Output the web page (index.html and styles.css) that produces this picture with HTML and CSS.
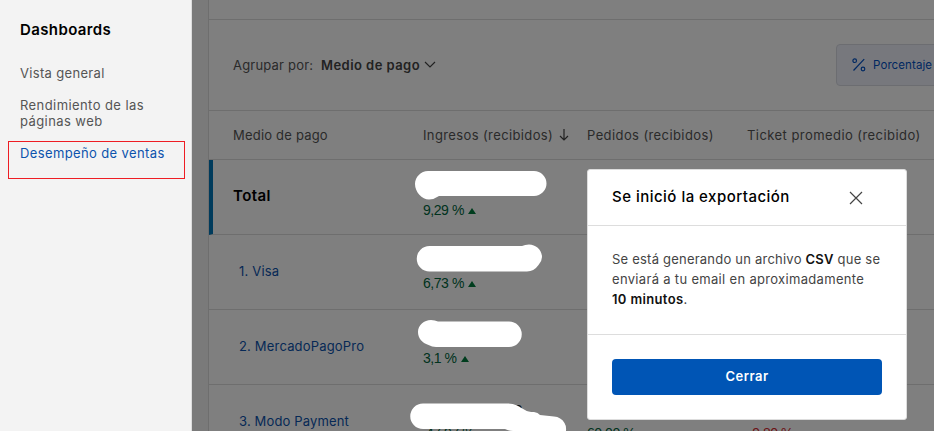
FILE: index.html
```html
<!DOCTYPE html>
<html lang="es">
<head>
<meta charset="utf-8">
<title>Dashboards</title>
<link rel="stylesheet" href="styles.css">
</head>
<body>
<div class="app">
  <nav class="sidebar">
    <h2><span>Dashboards</span></h2>
    <a><span>Vista general</span></a>
    <a class="nav-pages"><span>Rendimiento de las</span><br><span>páginas web</span></a>
    <a class="active"><span>Desempeño de ventas</span></a>
    <div class="highlight"></div>
  </nav>
  <main class="content">
    <section class="card">
      <div class="card-top"></div>
      <div class="toolbar">
        <span class="group-label">Agrupar por:</span>
        <span class="group-value">Medio de pago</span>
        <svg class="chevron" width="12" height="8" viewBox="0 0 12 8"><path d="M1 1l5 5 5-5"/></svg>
        <button class="percent">
          <svg width="14" height="14" viewBox="0 0 14 14"><circle cx="2.7" cy="2.7" r="1.8"/><circle cx="11" cy="11" r="1.8"/><path d="M12.2 1.2L1.5 12.5"/></svg>
          <span>Porcentaje</span>
        </button>
      </div>
      <div class="row head">
        <span>Medio de pago</span>
        <span class="sorted">Ingresos (recibidos)<svg width="10" height="12" viewBox="0 0 10 12"><path d="M5 0v11M1 7l4 4 4-4"/></svg></span>
        <span class="orders">Pedidos (recibidos)</span>
        <span class="ticket">Ticket promedio (recibido)</span>
      </div>
      <div class="row total"><b>Total</b><span class="change">9,29 %<i></i></span></div>
      <div class="row"><a>1. Visa</a><span class="change">6,73 %<i></i></span></div>
      <div class="row"><a class="mercado">2. MercadoPagoPro</a><span class="change">3,1 %<i></i></span></div>
      <div class="row"><a class="modo">3. Modo Payment</a><span class="change covered">47,97 %</span><span class="change">60,00 %</span><span class="change down">-9,80 %</span></div>
    </section>
    <div class="overlay"></div>
    <svg class="redactions" width="742" height="431" viewBox="192 0 742 431">
      <text class="digit" x="514.500" y="415">2</text>
      <path d="M428 171H534A12.5 12.5 0 0 1 534 196H439Q434 199.500 429 199.500C422 199.500 415 192 415 184C415 177 421 171 428 171Z"/>
      <path d="M429.500 246H522Q525 244.500 529 244.500C536 244.500 542 250 542 257Q542 261 538.500 265Q534 271.500 527 271.500H429.500A12.700 12.700 0 0 1 429.500 246Z"/>
      <path d="M431 320Q435 320 438 321.500H509A12.700 12.700 0 0 1 509 347H436Q432 347 428.500 345C422 343 418 338 418 332C418 325 424 320 431 320Z"/>
      <path d="M423 403.500H508Q513 403.500 517 405.500L525 410Q528 412 534 412Q538 412.500 540 415L554 416.500Q561 417 564.500 423Q566.500 426 566 431H513Q509 431 505 429H423A12.700 12.700 0 0 1 423 403.500Z"/>
    </svg>
  </main>
  <div class="modal">
    <header>
      <h3>Se inició la exportación</h3>
      <svg width="14" height="14" viewBox="0 0 14 14"><path d="M1 1l12 12M13 1L1 13"/></svg>
    </header>
    <div class="modal-body">
      <span class="line1">Se está generando un archivo <b>CSV</b> que se</span><br>
      <span class="line2">enviará a tu email en aproximadamente</span><br>
      <span class="line3"><b>10 minutos</b>.</span>
    </div>
    <footer><button>Cerrar</button></footer>
  </div>
</div>
</body>
</html>
```
FILE: styles.css
```css
* { box-sizing: border-box; }
body { margin: 0; font: 13px/16px Inter, "Liberation Sans", sans-serif; color: #555; }
button { font: inherit; }
.app { position: relative; display: flex; width: 934px; height: 431px; overflow: hidden; }
.sidebar { position: relative; flex: 0 0 192px; padding: 20px 0 0 20px; background: #f3f3f3; border-right: 1px solid #ddd; }
.sidebar h2 { margin: 0 0 25px; font-size: 15px; line-height: 20px; font-weight: 600; color: #000; letter-spacing: .38px; }
.sidebar a { display: block; margin-bottom: 16px; letter-spacing: .33px; }
.sidebar .nav-pages { letter-spacing: .42px; }
.sidebar .active { color: #0c53ad; letter-spacing: .38px; }
.highlight { position: absolute; left: 8px; top: 141px; width: 177px; height: 38px; border: 1px solid #ee1d23; }

.content { position: relative; flex: 0 0 742px; height: 431px; padding-left: 16px; background: #f5f5f5; overflow: hidden; }
.card { width: 760px; height: 470px; background: #fff; border-left: 1px solid #ddd; }
.card-top { height: 20px; border-bottom: 1px solid #ddd; }
.toolbar { display: flex; align-items: center; height: 91px; padding-left: 24px; border-bottom: 1px solid #ddd; white-space: nowrap; }
.toolbar > * { flex-shrink: 0; }
.group-label { width: 88px; letter-spacing: .2px; }
.group-value { width: 103px; font-weight: 600; color: #444; letter-spacing: .45px; }
svg { fill: none; stroke: #444; stroke-width: 1.2; }
.percent { display: flex; align-items: center; gap: 8px; width: 160px; height: 42px; margin-left: 400px; padding: 0 15px; border: 1px solid #d8dbe2; border-radius: 4px; background: #eff1fb; color: #0050c3; font-size: 11.500px; letter-spacing: .1px; }
.percent svg { stroke: #0050c3; }
.percent span { margin-left: -1px; padding-bottom: 1px; }
.row { display: grid; grid-template-columns: 190px 164px 161px 1fr; height: 75px; padding-left: 24px; border-bottom: 1px solid #ddd; align-items: center; white-space: nowrap; letter-spacing: .2px; }
.head { height: 49px; padding-bottom: 1px; letter-spacing: .2px; }
.sorted { display: flex; align-items: center; gap: 6px; letter-spacing: .38px; }
.orders { letter-spacing: .4px; }
.ticket { letter-spacing: .44px; margin-left: -1px; }
.row a { padding: 0 0 2px 6px; color: #0c53ad; }
.row .mercado { letter-spacing: .18px; }
.row .modo { letter-spacing: .15px; }
.total { padding-left: 20px; border-left: 4px solid #0076b8; }
.total b { padding-bottom: 2px; font-size: 15px; font-weight: 600; color: #000; letter-spacing: .4px; }
.change { align-self: start; padding-top: 40px; color: #00663c; font-family: "Liberation Sans", sans-serif; font-size: 14px; letter-spacing: -.45px; }
.total .change { padding-top: 42px; }
.covered { padding-left: 3px; }
.change i { display: inline-block; margin-left: 4px; vertical-align: 1px; border: 4px solid transparent; border-top: 0; border-bottom: 6px solid #007a3c; }
.down { color: #d8262c; }
.overlay { position: absolute; inset: 0; background: rgba(0, 0, 0, .5); }
.redactions { position: absolute; left: 0; top: 0; }
.redactions path { fill: #fff; stroke: none; }
.redactions .digit { fill: #111; stroke: none; font-size: 13px; font-weight: 500; }

.modal { position: absolute; left: 587px; top: 169px; width: 320px; height: 251px; background: #fff; border: 1px solid #ddd; border-radius: 3px; }
.modal header { display: flex; align-items: center; justify-content: space-between; height: 56px; padding: 0 43px 0 24px; border-bottom: 1px solid #ddd; }
.modal h3 { margin: 0; padding-bottom: 1px; font-size: 15px; font-weight: 500; color: #000; letter-spacing: .48px; }
.modal-body { height: 109px; padding: 23px 0 0 24px; line-height: 20px; border-bottom: 1px solid #ddd; white-space: nowrap; color: #444; letter-spacing: .22px; }
.modal-body .line2 { letter-spacing: .32px; }
.modal-body .line3 { letter-spacing: .35px; }
.modal-body b { font-weight: 600; color: #111; }
.modal footer { padding: 24px; }
.modal button { display: block; width: 270px; height: 36px; padding: 0 0 2px; border: 0; border-radius: 4px; background: #0055b5; color: #fff; font-weight: 600; letter-spacing: .5px; }
```
